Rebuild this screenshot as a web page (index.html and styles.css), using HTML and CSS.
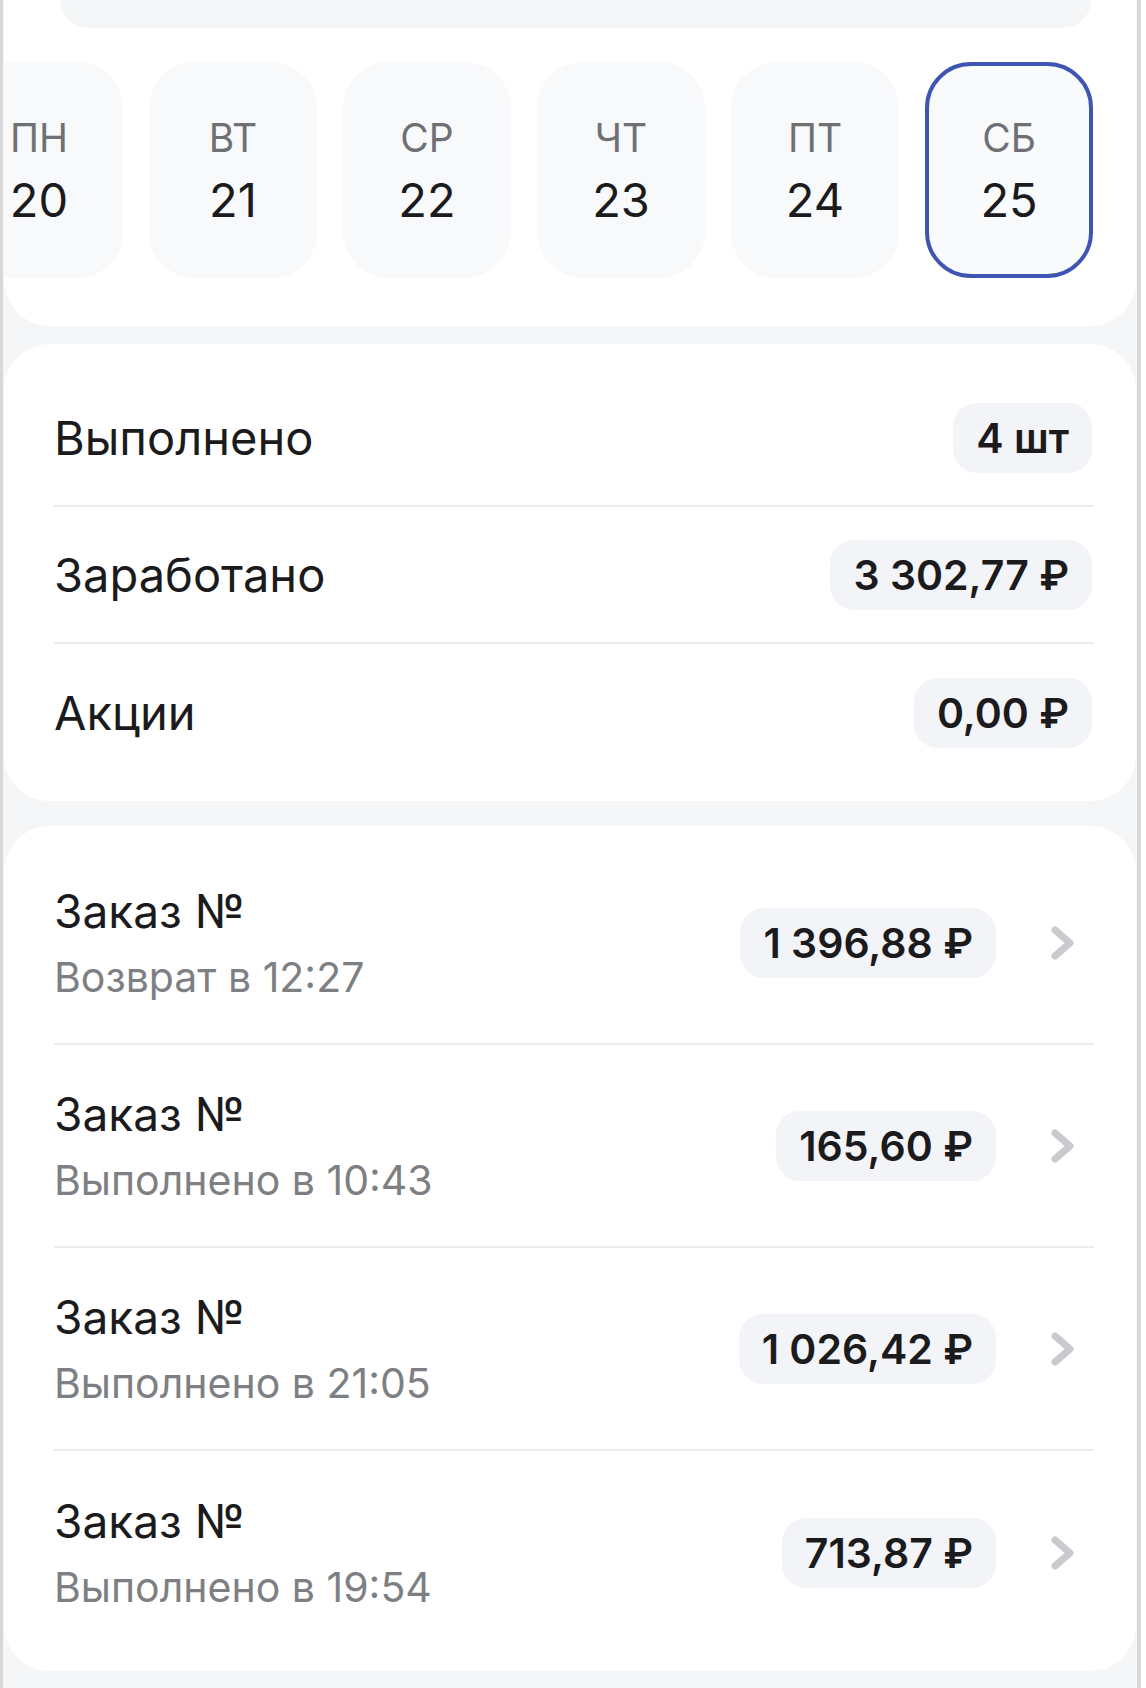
FILE: index.html
```html
<!DOCTYPE html>
<html lang="ru">
<head>
<meta charset="utf-8">
<link rel="stylesheet" href="styles.css">
<title>Статистика</title>
</head>
<body>
<div class="screen">
  <section class="card days-card">
    <div class="month-bar"></div>
    <div class="days">
      <div class="day"><span class="dname">ПН</span><span class="dnum">20</span></div>
      <div class="day"><span class="dname">ВТ</span><span class="dnum">21</span></div>
      <div class="day"><span class="dname">СР</span><span class="dnum">22</span></div>
      <div class="day"><span class="dname">ЧТ</span><span class="dnum">23</span></div>
      <div class="day"><span class="dname">ПТ</span><span class="dnum">24</span></div>
      <div class="day active"><span class="dname">СБ</span><span class="dnum">25</span></div>
    </div>
  </section>

  <section class="card stats-card">
    <div class="stat-row"><span class="label">Выполнено</span><span class="pill">4 шт</span></div>
    <div class="stat-row"><span class="label">Заработано</span><span class="pill">3 302,77 ₽</span></div>
    <div class="stat-row"><span class="label">Акции</span><span class="pill">0,00 ₽</span></div>
  </section>

  <section class="card orders-card">
    <div class="order-row">
      <div class="order-info">
        <span class="order-title">Заказ №</span>
        <span class="order-sub">Возврат в 12:27</span>
      </div>
      <span class="pill order-pill">1 396,88 ₽</span>
      <svg class="chev" viewBox="0 0 26 36"><path d="M5 5 L20 18 L5 31"/></svg>
    </div>
    <div class="order-row">
      <div class="order-info">
        <span class="order-title">Заказ №</span>
        <span class="order-sub">Выполнено в 10:43</span>
      </div>
      <span class="pill order-pill">165,60 ₽</span>
      <svg class="chev" viewBox="0 0 26 36"><path d="M5 5 L20 18 L5 31"/></svg>
    </div>
    <div class="order-row">
      <div class="order-info">
        <span class="order-title">Заказ №</span>
        <span class="order-sub">Выполнено в 21:05</span>
      </div>
      <span class="pill order-pill">1 026,42 ₽</span>
      <svg class="chev" viewBox="0 0 26 36"><path d="M5 5 L20 18 L5 31"/></svg>
    </div>
    <div class="order-row">
      <div class="order-info">
        <span class="order-title">Заказ №</span>
        <span class="order-sub">Выполнено в 19:54</span>
      </div>
      <span class="pill order-pill">713,87 ₽</span>
      <svg class="chev" viewBox="0 0 26 36"><path d="M5 5 L20 18 L5 31"/></svg>
    </div>
  </section>
</div>
</body>
</html>
```

FILE: styles.css
```css
* { box-sizing: border-box; }

html, body {
  margin: 0;
  padding: 0;
  background: #ffffff;
}

body {
  font-family: Inter, "Noto Sans", "Liberation Sans", sans-serif;
  color: #1b1b1d;
}

.screen {
  width: 1141px;
  min-height: 1688px;
  background: #f5f6f8;
  border-left: 3px solid #d8d8d8;
  border-right: 4px solid #d8d8d8;
  display: flex;
  flex-direction: column;
  padding: 0 1px;
}

.card {
  background: #ffffff;
  border-radius: 46px;
}

/* days */
.days-card {
  border-radius: 0 0 46px 46px;
  padding: 0 43px 48px 0;
  overflow: hidden;
}

.month-bar {
  height: 28px;
  margin-left: 56px;
  margin-right: 2px;
  background: #f5f6f8;
  border-radius: 0 0 40px 40px;
}

.days {
  margin-top: 34px;
  display: flex;
  justify-content: flex-end;
  gap: 26px;
}

.day {
  flex: 0 0 168px;
  height: 216px;
  border-radius: 46px;
  background: #f8f9fb;
  display: flex;
  flex-direction: column;
  align-items: center;
  justify-content: center;
  gap: 10px;
  padding-top: 2px;
}

.day.active {
  border: 4px solid #3f55b3;
  background: #f9fafc;
}

.dname {
  font-size: 39px;
  line-height: 48px;
  color: #6f7073;
  font-weight: 400;
}

.dnum {
  font-size: 47px;
  line-height: 56px;
  color: #1b1b1d;
  font-weight: 400;
}

/* stats */
.stats-card {
  margin-top: 18px;
  padding: 26px 44px 20px 50px;
}

.stat-row {
  height: 137px;
  display: flex;
  align-items: center;
  justify-content: space-between;
  border-bottom: 2px solid #ececee;
  margin-right: -2px;
  padding-right: 2px;
}

.stat-row:last-child {
  border-bottom: none;
}

.label {
  font-size: 47px;
  color: #1b1b1d;
}

.pill {
  background: #f3f4f7;
  border-radius: 24px;
  height: 70px;
  padding: 0 23px;
  display: inline-flex;
  align-items: center;
  font-size: 41px;
  font-weight: 600;
  color: #1b1b1d;
}

/* orders */
.orders-card {
  margin-top: 25px;
  padding: 16px 42px 17px 50px;
}

.order-row {
  height: 203px;
  display: flex;
  align-items: center;
  border-bottom: 2px solid #ececee;
}

.order-row:last-child {
  border-bottom: none;
}

.order-info {
  flex: 1;
  display: flex;
  flex-direction: column;
  gap: 14px;
}

.order-title {
  font-size: 46px;
  line-height: 54px;
  color: #1b1b1d;
  white-space: nowrap;
}

.order-sub {
  font-size: 41px;
  line-height: 50px;
  color: #7e7f83;
}

.order-pill {
  margin-right: 54px;
}

.chev {
  width: 26px;
  height: 36px;
  flex: 0 0 26px;
  margin-right: 18px;
}

.chev path {
  fill: none;
  stroke: #c9cacd;
  stroke-width: 7;
  stroke-linecap: round;
  stroke-linejoin: round;
}
```
